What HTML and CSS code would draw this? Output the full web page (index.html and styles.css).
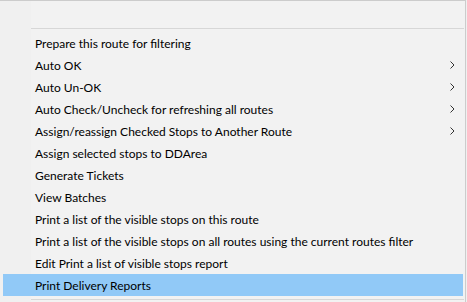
FILE: index.html
```html
<!DOCTYPE html>
<html lang="en">
<head>
    <meta charset="UTF-8">
    <title>Route menu</title>
    <link rel="stylesheet" href="styles.css">
</head>
<body>
    <div class="menu">
        <div class="head"></div>
        <div class="sep"></div>
        <ul class="items">
            <li class="item">Prepare this route for filtering</li>
            <li class="item">Auto OK <svg class="arrow" width="5" height="8" viewBox="0 0 5 8"><path d="M0.5 0.5 L4 4 L0.5 7.5" /></svg></li>
            <li class="item">Auto Un-OK <svg class="arrow" width="5" height="8" viewBox="0 0 5 8"><path d="M0.5 0.5 L4 4 L0.5 7.5" /></svg></li>
            <li class="item">Auto Check/Uncheck for refreshing all routes <svg class="arrow" width="5" height="8" viewBox="0 0 5 8"><path d="M0.5 0.5 L4 4 L0.5 7.5" /></svg></li>
            <li class="item">Assign/reassign Checked Stops to Another Route <svg class="arrow" width="5" height="8" viewBox="0 0 5 8"><path d="M0.5 0.5 L4 4 L0.5 7.5" /></svg></li>
            <li class="item">Assign selected stops to DDArea</li>
            <li class="item">Generate Tickets</li>
            <li class="item">View Batches</li>
            <li class="item">Print a list of the visible stops on this route</li>
            <li class="item">Print a list of the visible stops on all routes using the current routes filter</li>
            <li class="item">Edit Print a list of visible stops report</li>
            <li class="item active">Print Delivery Reports</li>
        </ul>
        <div class="sep bottom"></div>
    </div>
</body>
</html>
```

FILE: styles.css
```css
body {
    margin: 0;
    background-color: #f0f0f0;
    font-family: Lato, "Noto Sans", Arial, sans-serif;
    font-size: 12px;
    color: #000;
}
.menu {
    width: 466px;
    height: 302px;
    box-sizing: border-box;
    border-top: 1px solid #cccccc;
    border-right: 1px solid #cccccc;
    background: linear-gradient(to right, #f0f0f0 31px, #f2f2f2 31px);
}
.head {
    height: 27px;
}
.sep {
    height: 1px;
    margin: 0 1px 0 31px;
    background-color: #d7d7d7;
}
.items {
    list-style: none;
    margin: 3px 2px 0 3px;
    padding: 0;
}
.item {
    height: 22px;
    display: flex;
    align-items: center;
    justify-content: space-between;
    padding: 0 8px 0 32px;
}
.item.active {
    background-color: #91c9f7;
}
.arrow {
    fill: none;
    stroke: #333;
    stroke-width: 1;
}
.sep.bottom {
    margin-top: 3px;
}
```
